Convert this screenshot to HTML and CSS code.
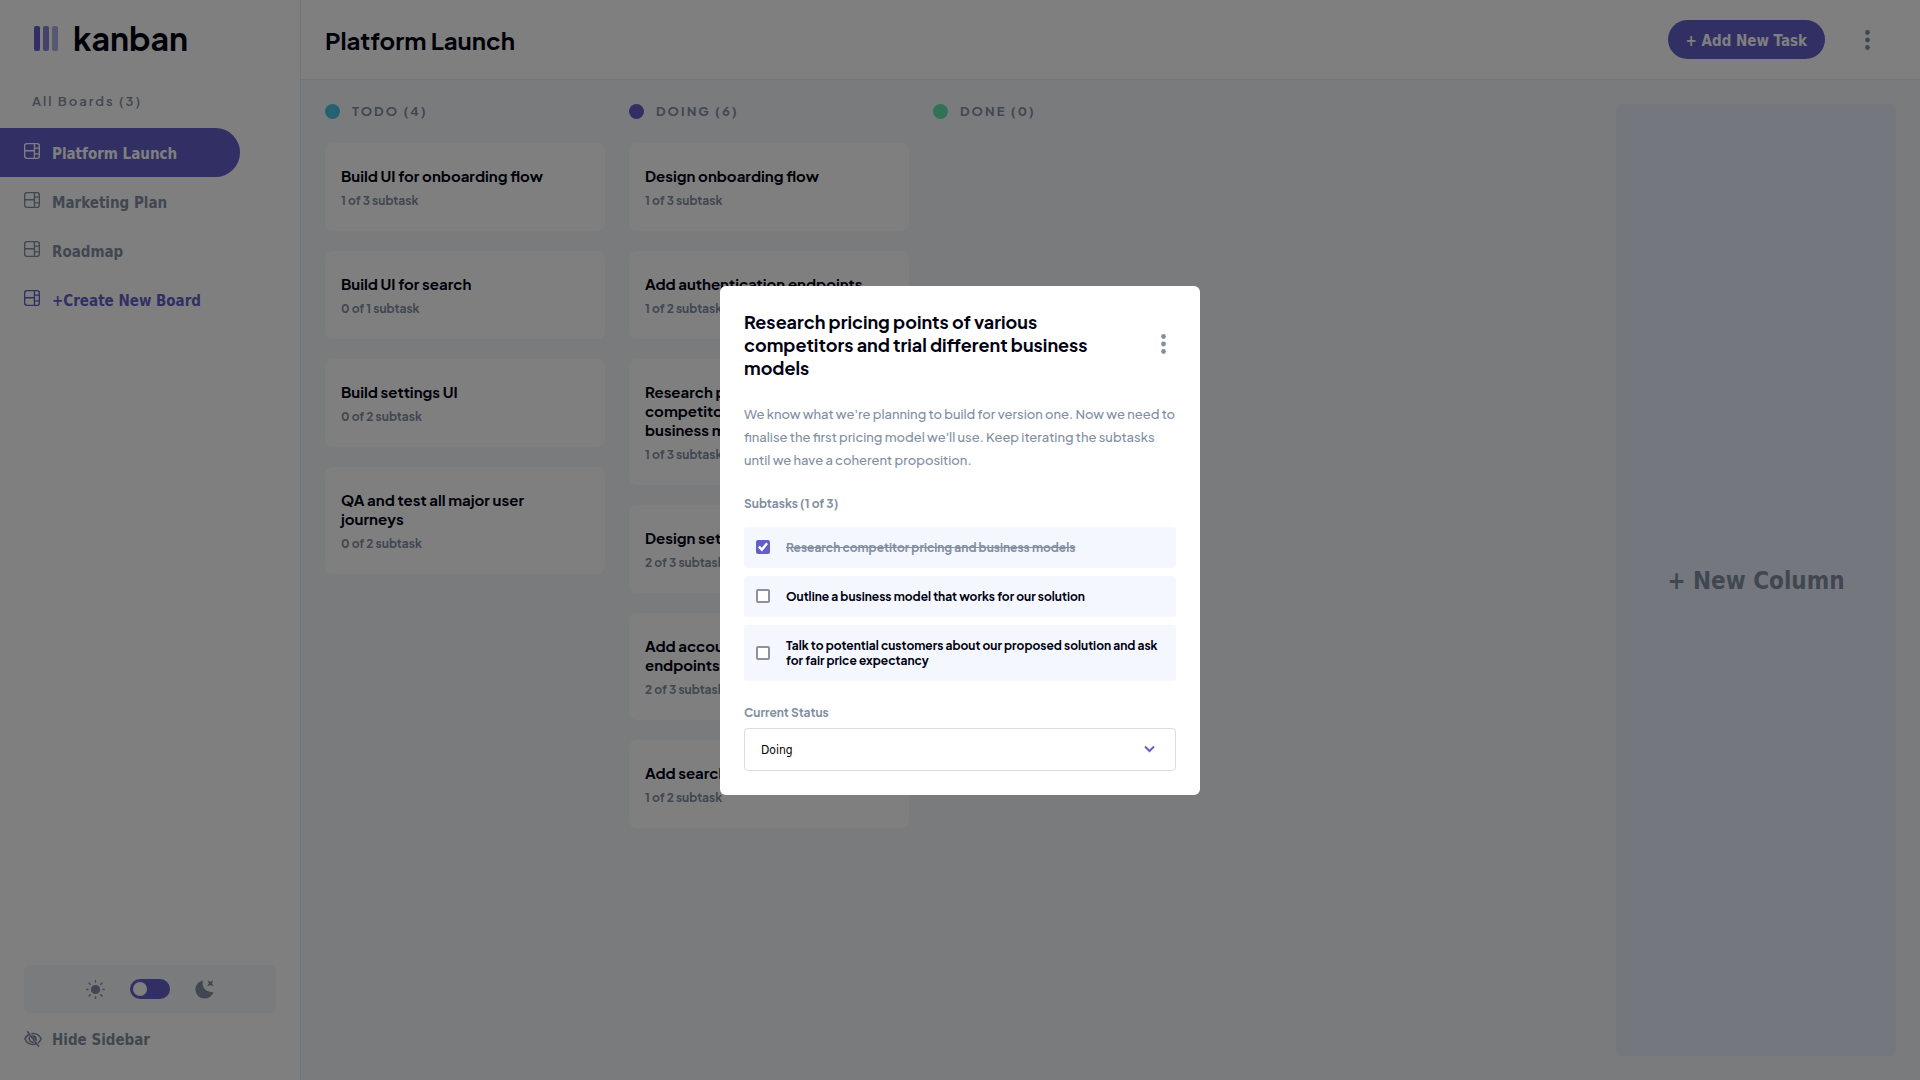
FILE: index.html
```html
<!DOCTYPE html>
<html lang="en">
<head>
<meta charset="utf-8">
<meta name="viewport" content="width=device-width, initial-scale=1">
<title>Kanban</title>
<link rel="stylesheet" href="styles.css">
</head>
<body>
<svg class="sprite" aria-hidden="true">
  <symbol id="icon-board" viewBox="0 0 16 16"><path d="M0 2.889A2.889 2.889 0 0 1 2.889 0H13.11A2.889 2.889 0 0 1 16 2.889V13.11A2.888 2.888 0 0 1 13.111 16H2.89A2.889 2.889 0 0 1 0 13.111V2.89Zm1.333 5.555v4.667c0 .859.697 1.556 1.556 1.556h6.889V8.444H1.333Zm8.445-1.333V1.333h-6.89A1.556 1.556 0 0 0 1.334 2.89V7.11h8.445Zm4.889-1.333H11.11v4.444h3.556V5.778Zm0 5.778H11.11v3.11h2a1.556 1.556 0 0 0 1.556-1.555v-1.555Zm0-7.112V2.89a1.555 1.555 0 0 0-1.556-1.556h-2v3.111h3.556Z"/></symbol>
  <symbol id="icon-dots" viewBox="0 0 5 20"><circle cx="2.5" cy="2.5" r="2.4"/><circle cx="2.5" cy="10" r="2.4"/><circle cx="2.5" cy="17.5" r="2.4"/></symbol>
</svg>
<div class="app">
  <aside class="sidebar">
    <div class="logo">
      <svg class="logo-mark" viewBox="0 0 24 25" aria-hidden="true"><rect width="6" height="25" rx="2"/><rect x="9" width="6" height="25" rx="2" opacity=".75"/><rect x="18" width="6" height="25" rx="2" opacity=".5"/></svg>
      <span>kanban</span>
    </div>
    <h2 class="boards-title">All Boards (3)</h2>
    <nav class="boards">
      <button class="board active" type="button"><svg class="icon"><use href="#icon-board"/></svg><span>Platform Launch</span></button>
      <button class="board" type="button"><svg class="icon"><use href="#icon-board"/></svg><span>Marketing Plan</span></button>
      <button class="board" type="button"><svg class="icon"><use href="#icon-board"/></svg><span>Roadmap</span></button>
      <button class="board create" type="button"><svg class="icon"><use href="#icon-board"/></svg><span>+Create New Board</span></button>
    </nav>
    <div class="theme">
      <svg class="theme-icon" viewBox="0 0 19 19" aria-hidden="true"><circle cx="9.5" cy="9.5" r="4.6"/><g fill="none" stroke="currentColor" stroke-width="1.4" stroke-linecap="round"><path d="M9.5 .8v1.2M9.5 17v1.2M.8 9.5H2M17 9.5h1.2M3 3l1.2 1.2M14.8 14.8 16 16M3 16l1.2-1.2M14.8 4.2 16 3"/></g></svg>
      <input class="switch" type="checkbox" role="switch" aria-label="Dark theme">
      <svg class="theme-icon" viewBox="0 0 19 19" aria-hidden="true"><path d="M8 .6C6.400 6.500 10 12.600 18.400 12.200 16.800 16.200 13.400 18.600 9.500 18.600A9.200 9.200 0 0 1 .4 9.600C.4 5.200 3.600 1.500 8 .6Z"/><path d="M12.600 .2 15.400 1.700 18.200 .2 17 3.200 18.500 6.200 15.400 4.900 12.300 6.200 13.800 3.200Z"/></svg>
    </div>
    <button class="hide" type="button">
      <svg class="hide-icon" viewBox="0 0 18 16" fill="none" stroke="currentColor" stroke-width="1.600" stroke-linecap="round" aria-hidden="true"><path d="M5.500 3C3.300 4.100 1.700 5.900 .9 8c1.500 3.500 4.600 5.500 8.100 5.500.9 0 1.700-.1 2.500-.4M8 2.600c4-.5 7.600 1.700 9.100 5.400-.6 1.500-1.500 2.700-2.600 3.600M5.500 6.200c-1 2.500.6 5 3.500 5.200M3.600.8l11 14.400"/><path d="M9 5c2.200 0 3.500 1.800 3 3.800Z" fill="currentColor"/></svg>
      <span>Hide Sidebar</span>
    </button>
  </aside>
  <div class="content">
    <header class="topbar">
      <h1>Platform Launch</h1>
      <button class="add-task" type="button">+ Add New Task</button>
      <button class="dots" type="button" aria-label="Board options"><svg><use href="#icon-dots"/></svg></button>
    </header>
    <main class="columns">
      <section class="column">
        <h2 class="column-title"><i class="dot todo"></i><span>TODO (4)</span></h2>
        <article class="card"><h3>Build UI for onboarding flow</h3><p>1 of 3 subtask</p></article>
        <article class="card"><h3>Build UI for search</h3><p>0 of 1 subtask</p></article>
        <article class="card"><h3>Build settings UI</h3><p>0 of 2 subtask</p></article>
        <article class="card"><h3>QA and test all major user journeys</h3><p>0 of 2 subtask</p></article>
      </section>
      <section class="column">
        <h2 class="column-title"><i class="dot doing"></i><span>DOING (6)</span></h2>
        <article class="card"><h3>Design onboarding flow</h3><p>1 of 3 subtask</p></article>
        <article class="card"><h3>Add authentication endpoints</h3><p>1 of 2 subtask</p></article>
        <article class="card"><h3>Research pricing points of various competitors and trial different business models</h3><p>1 of 3 subtask</p></article>
        <article class="card"><h3>Design settings and search</h3><p>2 of 3 subtask</p></article>
        <article class="card"><h3>Add account management endpoints</h3><p>2 of 3 subtask</p></article>
        <article class="card"><h3>Add search endpoints</h3><p>1 of 2 subtask</p></article>
      </section>
      <section class="column">
        <h2 class="column-title"><i class="dot done"></i><span>DONE (0)</span></h2>
      </section>
      <button class="new-column" type="button">+ New Column</button>
    </main>
  </div>
</div>
<div class="overlay">
  <div class="modal" role="dialog" aria-modal="true" aria-labelledby="task-title">
    <header class="modal-head">
      <h2 id="task-title">Research pricing points of various competitors and trial different business models</h2>
      <button class="dots" type="button" aria-label="Task options"><svg><use href="#icon-dots"/></svg></button>
    </header>
    <p class="description">We know what we're planning to build for version one. Now we need to finalise the first pricing model we'll use. Keep iterating the subtasks until we have a coherent proposition.</p>
    <h3 class="label">Subtasks (1 of 3)</h3>
    <div class="subtasks">
      <label class="subtask"><input type="checkbox" checked><span>Research competitor pricing and business models</span></label>
      <label class="subtask"><input type="checkbox"><span>Outline a business model that works for our solution</span></label>
      <label class="subtask"><input type="checkbox"><span>Talk to potential customers about our proposed solution and ask for fair price expectancy</span></label>
    </div>
    <label class="label" for="status">Current Status</label>
    <div class="select">
      <select id="status"><option>Todo</option><option selected>Doing</option><option>Done</option></select>
      <svg class="chevron" viewBox="0 0 11 8" aria-hidden="true"><path d="m1 1.500 4.500 4.500L10 1.500" fill="none" stroke="currentColor" stroke-width="2"/></svg>
    </div>
  </div>
</div>
</body>
</html>
```

FILE: styles.css
```css
:root {
  --purple: #635fc7;
  --muted: #828fa3;
  --ink: #000112;
  --line: #e4ebfa;
  --pale: #f4f8fe;
  --board: #f3f6f9;
  --display: "Plus Jakarta Sans", Inter, sans-serif;
  --ui: "DejaVu Sans Condensed", "DejaVu Sans", sans-serif;
}

* { box-sizing: border-box; margin: 0; }

body { font-family: var(--display); color: var(--ink); background: var(--board); }

button { border: 0; padding: 0; background: none; font: 700 15px/24px var(--ui); color: inherit; cursor: pointer; }

svg { display: block; fill: currentColor; }

.sprite { display: none; }

.app { display: flex; min-height: 100vh; }

/* Sidebar */
.sidebar {
  display: flex;
  flex-direction: column;
  flex: none;
  width: 301px;
  padding-bottom: 28px;
  border-right: 1px solid var(--line);
  background: #fff;
  color: var(--muted);
}

.logo {
  display: flex;
  align-items: center;
  gap: 15px;
  padding: 16px 34px 0;
  font-size: 32px;
  font-weight: 700;
  line-height: 44px;
  color: var(--ink);
}

.logo-mark { width: 24px; height: 25px; color: var(--purple); }

.boards-title {
  padding: 31px 32px 17px;
  font-size: 13px;
  font-weight: 600;
  line-height: 20px;
  letter-spacing: 2px;
}

.boards { display: flex; flex-direction: column; }

.board {
  display: flex;
  align-items: center;
  gap: 12px;
  width: 240px;
  height: 49px;
  padding: 2px 24px 0;
  border-radius: 0 25px 25px 0;
}

.icon { width: 16px; height: 16px; margin-bottom: 6px; }
.board.active { background: var(--purple); color: #fff; }
.board.create { color: var(--purple); }

.theme {
  display: flex;
  align-items: center;
  justify-content: center;
  gap: 25px;
  height: 48px;
  margin: auto 24px 15px;
  border-radius: 6px;
  background: var(--board);
}

.theme-icon { width: 19px; height: 19px; }

.switch {
  appearance: none;
  display: flex;
  align-items: center;
  width: 40px;
  height: 20px;
  margin: 0;
  padding: 0 3px;
  border-radius: 10px;
  background: var(--purple);
}

.switch::before { content: ""; width: 14px; height: 14px; border-radius: 50%; background: #fff; }
.switch:checked { justify-content: flex-end; }

.hide { display: flex; align-items: center; gap: 10px; margin: 0 24px; }
.hide-icon { width: 18px; height: 16px; margin-bottom: 2px; fill: none; }

/* Board */
.content { display: flex; flex-direction: column; flex: 1; min-width: 0; }

.topbar {
  display: flex;
  align-items: center;
  height: 80px;
  padding: 0 43px 0 24px;
  border-bottom: 1px solid var(--line);
  background: #fff;
}

.topbar h1 { flex: 1; font-size: 24px; font-weight: 700; line-height: 32px; }

.add-task {
  height: 39px;
  margin-right: 32px;
  padding: 2px 18px 0;
  border-radius: 20px;
  background: var(--purple);
  color: #fff;
}

.dots { display: grid; place-items: center; flex: none; width: 20px; height: 32px; color: var(--muted); }
.dots svg { width: 5px; height: 20px; }

.columns { display: flex; flex: 1; gap: 24px; padding: 24px; }

.column { display: flex; flex-direction: column; gap: 20px; width: 280px; }

.column-title {
  display: flex;
  gap: 12px;
  height: 19px;
  font-size: 13px;
  font-weight: 700;
  line-height: 14px;
  letter-spacing: 2px;
  color: var(--muted);
}

.dot { width: 15px; height: 15px; border-radius: 50%; }
.dot.todo { background: #49c4e5; }
.dot.doing { background: var(--purple); }
.dot.done { background: #67e2ae; }

.card { padding: 23px 16px; border-radius: 8px; background: #fff; }
.card h3 { margin-bottom: 8px; font-size: 15px; font-weight: 700; line-height: 19px; }
.card p { font-size: 12px; font-weight: 700; line-height: 15px; color: var(--muted); }

.new-column {
  width: 280px;
  margin-left: auto;
  padding-top: 2px;
  border-radius: 6px;
  background: #e9effa;
  color: var(--muted);
  font-size: 24px;
}

/* Task dialog */
.overlay {
  position: fixed;
  inset: 0;
  display: flex;
  align-items: center;
  justify-content: center;
  background: rgb(0 0 0 / 50%);
}

.modal { width: 100%; max-width: 480px; padding: 24px; border-radius: 6px; background: #fff; }

.modal-head { display: flex; align-items: center; gap: 24px; margin-bottom: 24px; padding-right: 3px; }
.modal-head h2 { flex: 1; font-size: 18px; font-weight: 700; line-height: 23px; }

.description { margin-bottom: 24px; font-size: 13px; font-weight: 500; line-height: 23px; color: var(--muted); }

.label { display: block; font-size: 12px; font-weight: 700; line-height: 15px; color: var(--muted); }

.subtasks { display: grid; gap: 8px; margin: 16px 0 24px; }

.subtask {
  display: flex;
  align-items: center;
  gap: 16px;
  padding: 13px 12px;
  border-radius: 4px;
  background: var(--pale);
  font-size: 12px;
  font-weight: 700;
  line-height: 15px;
}

.subtask input {
  appearance: none;
  flex: none;
  width: 14px;
  height: 14px;
  margin: 0;
  border: 2px solid #8f8f9d;
  border-radius: 2px;
  background: #fff;
}

.subtask input:checked { border-color: var(--purple); background: var(--purple); }

.subtask input:checked::before {
  content: "";
  display: block;
  height: 100%;
  background: #fff;
  clip-path: polygon(0 55%, 18% 38%, 38% 58%, 82% 4%, 100% 20%, 40% 94%);
}

.subtask input:checked + span { color: var(--muted); text-decoration: line-through; }

.select { display: grid; align-items: center; margin-top: 8px; }
.select > * { grid-area: 1 / 1; }

.select select {
  appearance: none;
  width: 100%;
  height: 43px;
  padding: 1px 16px 0;
  border: 1px solid #dadce4;
  border-radius: 4px;
  background: #fff;
  color: #000;
  font: 400 12px var(--ui);
}

.chevron { justify-self: end; width: 11px; height: 8px; margin-right: 21px; color: var(--purple); pointer-events: none; }
```
